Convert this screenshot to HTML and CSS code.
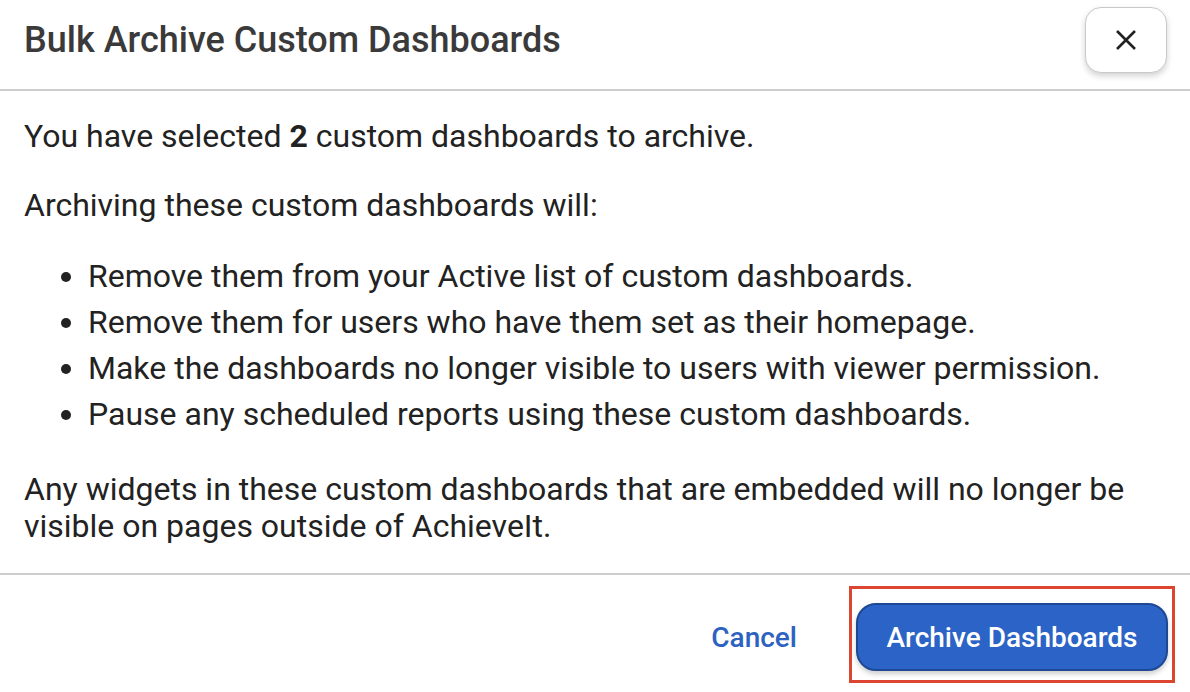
FILE: index.html
```html
<!DOCTYPE html>
<html lang="en">
<head>
<meta charset="utf-8">
<title>Bulk Archive Custom Dashboards</title>
<link rel="stylesheet" href="styles.css">
</head>
<body>
<div class="modal">
  <header class="modal-header">
    <h1 class="modal-title">Bulk Archive Custom Dashboards</h1>
    <button class="close-btn" aria-label="Close">
      <svg width="22" height="22" viewBox="0 0 22 22"><path d="M2 2 L20 20 M20 2 L2 20" stroke="#222" stroke-width="2.6" stroke-linecap="butt" fill="none"/></svg>
    </button>
  </header>
  <section class="modal-body">
    <p class="para">You have selected <strong>2</strong> custom dashboards to archive.</p>
    <p class="para">Archiving these custom dashboards will:</p>
    <ul class="effects">
      <li>Remove them from your Active list of custom dashboards.</li>
      <li>Remove them for users who have them set as their homepage.</li>
      <li>Make the dashboards no longer visible to users with viewer permission.</li>
      <li>Pause any scheduled reports using these custom dashboards.</li>
    </ul>
    <p class="para">Any widgets in these custom dashboards that are embedded will no longer be visible on pages outside of AchieveIt.</p>
  </section>
  <footer class="modal-footer">
    <button class="cancel-btn">Cancel</button>
    <div class="highlight">
      <button class="primary-btn">Archive Dashboards</button>
    </div>
  </footer>
</div>
</body>
</html>
```

FILE: styles.css
```css
* { box-sizing: border-box; }
html, body { margin: 0; padding: 0; background: #fff; }
body {
  font-family: Roboto, "Noto Sans", "Liberation Sans", sans-serif;
  color: #222;
  width: 1190px;
  height: 692px;
  overflow: hidden;
}
.modal { width: 1190px; }
.modal-header {
  height: 91px;
  border-bottom: 2px solid #cdcdcd;
  display: flex;
  align-items: flex-start;
  justify-content: space-between;
  padding: 7px 23px 0 24px;
}
.modal-title {
  margin: 0;
  font-size: 36px;
  font-weight: 500;
  color: #3a3a3a;
  line-height: 40px;
  padding-top: 13px;
}
.close-btn {
  width: 82px;
  height: 66px;
  border: 1.5px solid #c9c9c9;
  border-radius: 16px;
  background: #fff;
  box-shadow: 0 3px 6px rgba(0,0,0,0.18);
  display: flex;
  align-items: center;
  justify-content: center;
  padding: 0;
  cursor: pointer;
}
.modal-body {
  padding: 27px 24px 28px 24px;
  border-bottom: 2px solid #cdcdcd;
  font-size: 32px;
  line-height: 37px;
}
.para { margin: 0 0 32px 0; }
.para:last-child { margin-bottom: 0; }
.para strong { font-weight: 700; }
.effects {
  margin: -3px 0 34px 0;
  padding-left: 64px;
  line-height: 46px;
}
.effects li { padding-left: 0; }
.modal-footer {
  display: flex;
  justify-content: flex-end;
  align-items: center;
  padding: 11px 15px 0 0;
  gap: 52px;
}
.cancel-btn {
  background: none;
  border: none;
  color: #2d62c0;
  font-family: inherit;
  font-size: 28px;
  font-weight: 500;
  padding: 0;
  margin-top: 5px;
  cursor: pointer;
}
.highlight {
  border: 3px solid #dc4530;
  padding: 14px 4px 9px 4px;
}
.primary-btn {
  display: block;
  width: 312px;
  height: 68px;
  background: #2b63c6;
  border: 2px solid #1e4894;
  border-radius: 20px;
  color: #fff;
  font-family: inherit;
  font-size: 28px;
  font-weight: 500;
  box-shadow: 0 3px 5px rgba(0,0,0,0.2);
  cursor: pointer;
}
```
